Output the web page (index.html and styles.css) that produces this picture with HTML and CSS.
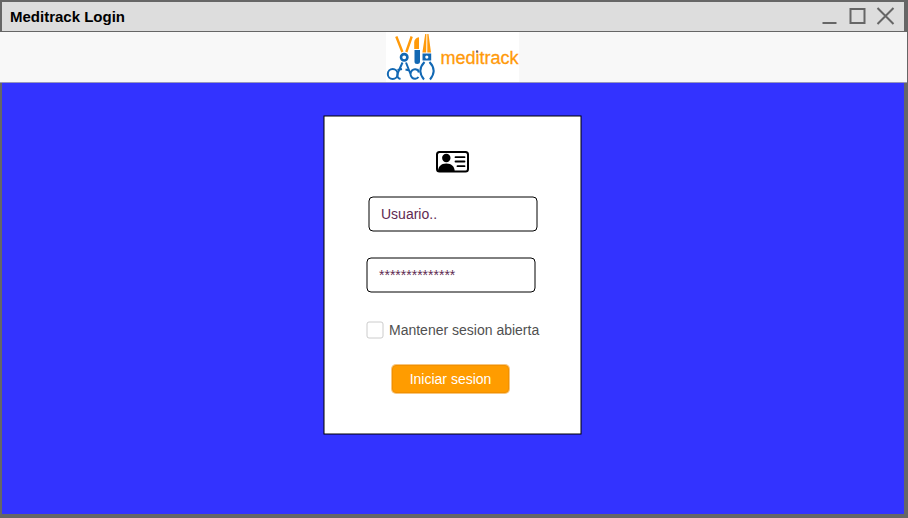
FILE: index.html
```html
<!DOCTYPE html>
<html lang="es">
<head>
<meta charset="utf-8">
<title>Meditrack Login</title>
<link rel="stylesheet" href="styles.css">
</head>
<body>
<div class="window">
  <div class="titlebar">
    <h1 class="title">Meditrack Login</h1>
    <svg class="controls" width="76" height="20" viewBox="0 0 76 20" fill="none" stroke="#666" stroke-width="2">
      <path d="M2.500 17H16.500M30.500 3H44.500V17H30.500ZM57.500 2L73.500 18M73.500 2L57.500 18"/>
    </svg>
  </div>
  <header class="header">
    <svg class="logo" width="133" height="50" viewBox="386 32 133 50">
      <rect x="386" y="32" width="133" height="50" fill="#fff"/>
      <g fill="none" stroke="#ff9a0a" stroke-width="2.400">
        <path d="M396.300 36.500L402.400 52M411.700 36.500L406.300 52"/>
      </g>
      <path d="M419 37.200V49H414.200V42.500C414.200 39.500 416 37.500 419 37.200Z" fill="#ff9a0a"/>
      <path d="M425.200 34H426.400L426.200 52.500H422.400ZM427.300 34H428.500L431 52.500H427.300Z" fill="#ff9a0a"/>
      <path d="M414.500 50H420V61.500Q420 64 417.200 64T414.500 61.500Z" fill="#1268b3"/>
      <path fill-rule="evenodd" d="M422.500 53.500H431.200V60.500H422.500ZM426.800 55.500A1.600 1.600 0 1 0 426.800 58.700A1.600 1.600 0 1 0 426.800 55.500Z" fill="#1268b3"/>
      <g fill="none" stroke="#1268b3" stroke-width="2">
        <circle cx="404.200" cy="57.300" r="3.200" stroke-width="2.600"/>
        <circle cx="392.700" cy="74" r="4.900"/>
        <path d="M402.500 62.500L398 72.500Q396 78 400.500 79M397.500 70L402 69M405.500 69.500L408.500 70.200M406 62.500L410.700 74.500M418.500 71A4.500 4.700 0 1 0 418.500 77M417.500 69L418.800 72.500"/>
        <path d="M424.500 62Q416.500 70.500 424 79.500M429.500 62Q437.500 70.500 430 79.500"/>
      </g>
      <text class="logo-text" x="440.500" y="63.500" textLength="78" lengthAdjust="spacingAndGlyphs">meditrack</text>
      <rect x="476" y="50.500" width="2" height="2" fill="#5b6480"/>
    </svg>
  </header>
  <main class="content">
    <form class="card">
      <svg class="outline" width="259" height="320"><rect x="1" y="1" width="257" height="318"/></svg>
      <svg class="id-icon" width="34" height="24" viewBox="0 0 34 24">
        <rect x="1" y="2" width="31" height="19.500" rx="2.500" fill="#fff" stroke="#000" stroke-width="2"/>
        <circle cx="10.300" cy="8" r="4.200"/>
        <path d="M2 21.500C2 16.500 5 13.500 10.300 13.500S18.700 16.500 18.700 21.500Z"/>
        <path d="M19.500 7.200H28.500M19.500 11.500H28.500M21.500 16.200H28.500" fill="none" stroke="#000" stroke-width="1.800" stroke-linecap="round"/>
      </svg>
      <div class="field field-user">
        <svg class="outline" width="170" height="36"><rect x="1" y="1" width="168" height="34" rx="4"/></svg>
        Usuario..
      </div>
      <div class="field field-pass">
        <svg class="outline" width="170" height="36"><rect x="1" y="1" width="168" height="34" rx="4"/></svg>
        **************
      </div>
      <label class="remember">
        <svg class="box" width="18" height="18"><rect x="1" y="1" width="16" height="16" rx="2"/></svg>
        <span>Mantener sesion abierta</span>
      </label>
      <button class="submit" type="button">Iniciar sesion</button>
    </form>
  </main>
</div>
</body>
</html>
```
FILE: styles.css
```css
* {
  box-sizing: border-box;
}

body {
  margin: 0;
  font: 14px/16px "Liberation Sans", Arial, sans-serif;
}

.window {
  display: flex;
  flex-direction: column;
  height: 518px;
  padding: 2px 4px 4px 2px;
  background: #666;
}

.titlebar {
  display: flex;
  align-items: center;
  justify-content: space-between;
  height: 29px;
  padding: 0 8px;
  background: #ddd;
}

.title {
  margin: 0;
  color: #000;
  font-size: 15px;
  line-height: 18px;
}

.controls {
  margin-top: -1px;
}

.header {
  display: flex;
  height: 51px;
  margin: 1px -3px 0 -2px;
  padding-left: 386px;
  background: #f8f8f8;
  border-bottom: 1px solid #9696bd;
}

.logo-text {
  fill: #ff9a0a;
  stroke: #ff9a0a;
  stroke-width: 0.3px;
  font-size: 18px;
}

.content {
  flex: 1;
  display: flex;
  justify-content: center;
  align-items: flex-start;
  padding-top: 33px;
  background: #33f;
}

.card {
  position: relative;
  display: flex;
  flex-direction: column;
  align-items: flex-start;
  width: 257px;
  height: 318px;
  margin-right: 1px;
  padding: 34px 0 0 42px;
  background: #fff;
}

.outline {
  position: absolute;
  inset: 0;
  fill: none;
  stroke: #000;
}

.card > .outline {
  inset: -1px;
}

.id-icon {
  margin-left: 70px;
}

.field {
  position: relative;
  width: 170px;
  height: 36px;
  padding: 10px 13px;
  color: #5f2a52;
}

.field-user {
  margin: 22px 0 0 2px;
}

.field-pass {
  margin-top: 25px;
}

.remember {
  display: flex;
  align-items: center;
  gap: 5px;
  margin-top: 28px;
  color: #505050;
  white-space: nowrap;
}

.box {
  fill: #fff;
  stroke: #ccc;
}

.submit {
  width: 117px;
  height: 28px;
  margin: 26px 0 0 26px;
  padding: 0;
  background: #ff9c00;
  border: 1px solid #f29100;
  border-radius: 4px;
  box-shadow: 0 0 0 1px #f7c680;
  color: #fff;
  font: inherit;
}
```
